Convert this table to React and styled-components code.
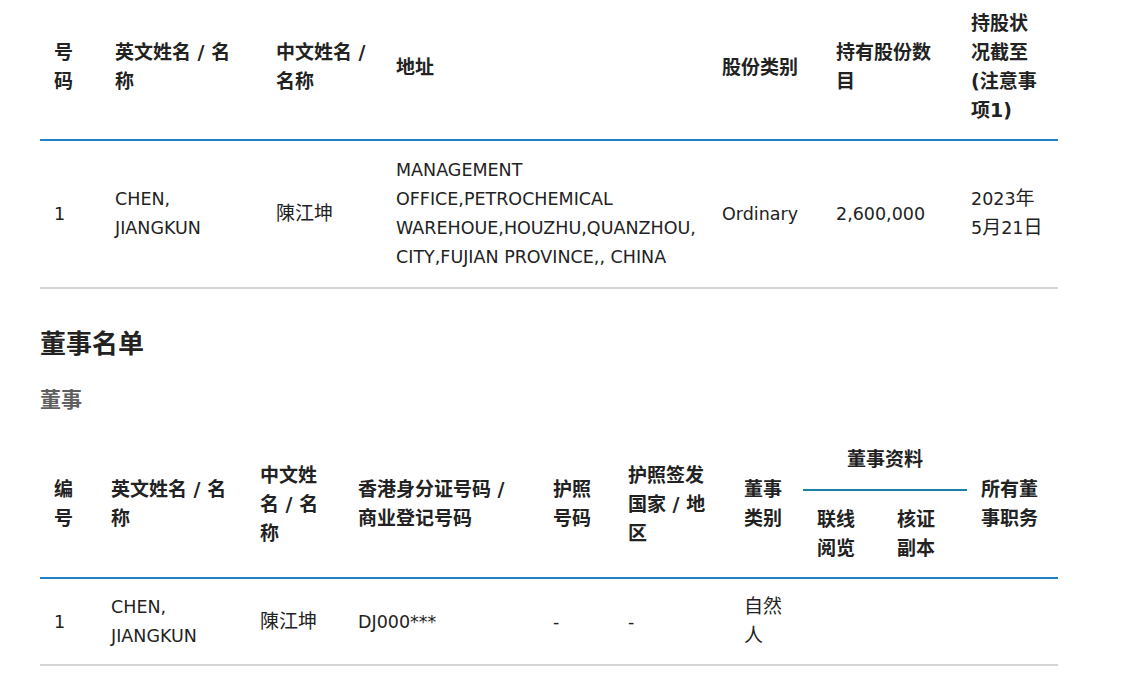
import React from 'react'
import styled, { createGlobalStyle } from 'styled-components'

const GlobalStyle = createGlobalStyle`
    body {
        margin: 0;
        background: #fff;
        color: #222;
        font-family: "DejaVu Sans", "Noto Sans CJK SC", sans-serif;
    }
`

const Page = styled.div`
    padding: 0 67px 0 40px;
`

const Table = styled.table`
    width: 1018px;
    border-collapse: collapse;
    table-layout: fixed;
    font-size: 17.5px;
    line-height: 29px;
`

const Th = styled.th`
    vertical-align: middle;
    font-family: "DejaVu Sans", "Noto Sans CJK SC", sans-serif;
    font-weight: 700;
    font-size: 19px;
    color: #222;
    padding: ${p => p.$pad || '14px 14px'};
    border-bottom: ${p => (p.$sub ? '2px solid #1c7fa6' : 'none')};
    text-align: ${p => (p.$center ? 'center' : 'left')};
`

const HeadRow = styled.tr`
    border-bottom: 2px solid #1f80c8;
`

const BodyRow = styled.tr`
    border-bottom: 2px solid #d4d4d4;
`

const Td = styled.td`
    vertical-align: middle;
    padding: ${p => p.$pad || '15px 14px'};
    color: #222;
    font-weight: 400;
    word-break: break-word;
`

const Cjk = styled.span`
    font-family: "Noto Sans CJK SC", sans-serif;
    font-size: 19px;
    line-height: 1;
`

const Heading = styled.h2`
    margin: 33px 0 0;
    font-family: "Noto Sans CJK SC", sans-serif;
    font-size: 26px;
    line-height: 40px;
    font-weight: 700;
    color: #222;
`

const SubHeading = styled.h3`
    margin: 21px 0 0;
    font-family: "Noto Sans CJK SC", sans-serif;
    font-size: 21px;
    line-height: 30px;
    font-weight: 700;
    color: #5f5f5f;
`

const Spacer = styled.div`
    height: 18px;
`

const shareCols = [61, 161, 120, 326, 114, 135, 101]
const directorCols = [57, 149, 98, 195, 75, 116, 73, 80, 84, 91]

function Cols({ widths }) {
    return (
        <colgroup>
            {widths.map((w, i) => <col key={i} style={{ width: w }} />)}
        </colgroup>
    )
}

export default function App() {
    return (
        <Page>
            <GlobalStyle />
            <Table>
                <Cols widths={shareCols} />
                <thead>
                    <HeadRow>
                        <Th $pad="9px 14px 14px">号码</Th>
                        <Th $pad="9px 14px 14px">英文姓名 / 名称</Th>
                        <Th $pad="9px 14px 14px">中文姓名 / 名称</Th>
                        <Th $pad="9px 14px 14px">地址</Th>
                        <Th $pad="9px 14px 14px">股份类别</Th>
                        <Th $pad="9px 14px 14px">持有股份数目</Th>
                        <Th $pad="9px 14px 14px">持股状况截至(注意事项1)</Th>
                    </HeadRow>
                </thead>
                <tbody>
                    <BodyRow>
                        <Td>1</Td>
                        <Td>CHEN, JIANGKUN</Td>
                        <Td><Cjk>陳江坤</Cjk></Td>
                        <Td $pad="15px 4px 15px 14px">MANAGEMENT OFFICE,PETROCHEMICAL WAREHOUE,HOUZHU,QUANZHOU, CITY,FUJIAN PROVINCE,, CHINA</Td>
                        <Td>Ordinary</Td>
                        <Td>2,600,000</Td>
                        <Td>2023<Cjk>年</Cjk> 5<Cjk>月</Cjk>21<Cjk>日</Cjk></Td>
                    </BodyRow>
                </tbody>
            </Table>

            <Heading>董事名单</Heading>
            <SubHeading>董事</SubHeading>
            <Spacer />

            <Table>
                <Cols widths={directorCols} />
                <thead>
                    <tr>
                        <Th rowSpan={2}>编号</Th>
                        <Th rowSpan={2}>英文姓名 / 名称</Th>
                        <Th rowSpan={2}>中文姓名 / 名称</Th>
                        <Th rowSpan={2}>香港身分证号码 / 商业登记号码</Th>
                        <Th rowSpan={2}>护照号码</Th>
                        <Th rowSpan={2}>护照签发国家 / 地区</Th>
                        <Th rowSpan={2}>董事类别</Th>
                        <Th colSpan={2} $center $sub $pad="14px 0 15px">董事资料</Th>
                        <Th rowSpan={2}>所有董事职务</Th>
                    </tr>
                    <HeadRow>
                        <Th>联线阅览</Th>
                        <Th>核证副本</Th>
                    </HeadRow>
                </thead>
                <tbody>
                    <BodyRow>
                        <Td $pad="14px 14px 13px">1</Td>
                        <Td $pad="14px 14px 13px">CHEN, JIANGKUN</Td>
                        <Td $pad="14px 14px 13px"><Cjk>陳江坤</Cjk></Td>
                        <Td $pad="14px 14px 13px">DJ000***</Td>
                        <Td $pad="14px 14px 13px">-</Td>
                        <Td $pad="14px 14px 13px">-</Td>
                        <Td $pad="14px 14px 13px"><Cjk>自然人</Cjk></Td>
                        <Td $pad="14px 14px 13px"></Td>
                        <Td $pad="14px 14px 13px"></Td>
                        <Td $pad="14px 14px 13px"></Td>
                    </BodyRow>
                </tbody>
            </Table>
        </Page>
    )
}
